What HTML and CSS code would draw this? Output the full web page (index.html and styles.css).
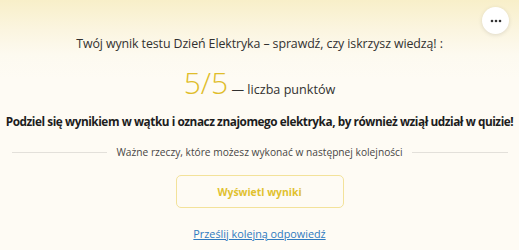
FILE: index.html
```html
<!DOCTYPE html>
<html lang="pl">
<head>
  <meta charset="UTF-8">
  <title>Wynik testu</title>
  <link rel="stylesheet" href="styles.css">
</head>
<body>
  <div class="result-page">
    <button class="more-btn" type="button" aria-label="Więcej opcji">
      <svg width="12" height="4" viewBox="0 0 12 4"><circle cx="2" cy="2" r="1.3"/><circle cx="6" cy="2" r="1.3"/><circle cx="10" cy="2" r="1.3"/></svg>
    </button>
    <p class="result-title">Twój wynik testu Dzień Elektryka – sprawdź, czy iskrzysz wiedzą! :</p>
    <p class="score"><span class="score-value">5/5</span> — liczba punktów</p>
    <p class="share-text">Podziel się wynikiem w wątku i oznacz znajomego elektryka, by również wziął udział w quizie!</p>
    <div class="divider"><span>Ważne rzeczy, które możesz wykonać w następnej kolejności</span></div>
    <button class="results-btn" type="button">Wyświetl wyniki</button>
    <a class="again-link" href="#">Prześlij kolejną odpowiedź</a>
  </div>
</body>
</html>
```

FILE: styles.css
```css
html, body {
  margin: 0;
  padding: 0;
  height: 100%;
}
body {
  font-family: 'Open Sans', 'Noto Sans', Arial, sans-serif;
  color: #323130;
  background: linear-gradient(180deg, #f8efc9 0px, #fbf5e0 30px, #fdfaf0 55px, #fefbf4 80px, #fefbf4 100%);
  overflow: hidden;
}
.result-page {
  position: relative;
  height: 250px;
  display: flex;
  flex-direction: column;
  align-items: center;
  padding-top: 34px;
  box-sizing: border-box;
}
.more-btn {
  position: absolute;
  top: 7px;
  right: 10px;
  width: 27px;
  height: 27px;
  border-radius: 50%;
  border: none;
  background: #fff;
  box-shadow: 0 1px 4px rgba(0,0,0,0.12);
  display: flex;
  align-items: center;
  justify-content: center;
  padding: 0;
}
.more-btn svg { fill: #333; }
p { margin: 0; }
.result-title {
  font-size: 12.4px;
  letter-spacing: -0.1px;
  line-height: 20px;
}
.score {
  margin-top: 12px;
  font-size: 12.6px;
  line-height: 34px;
}
.score-value {
  font-size: 30px;
  color: #e0bd2a;
  font-weight: 300;
}
.share-text {
  margin-top: 5px;
  font-size: 11.8px;
  letter-spacing: -0.45px;
  font-weight: 700;
  line-height: 18px;
  color: #1d1d1d;
  white-space: nowrap;
}
.divider {
  margin-top: 15px;
  width: 496px;
  display: flex;
  align-items: center;
  gap: 9px;
  font-size: 10.2px;
  color: #484644;
}
.divider::before, .divider::after {
  content: "";
  flex: 1;
  height: 1px;
  background: #e3e0da;
}
.results-btn {
  margin-top: 16px;
  width: 168px;
  height: 33px;
  border: 1px solid #f3e29a;
  border-radius: 5px;
  background: transparent;
  font-family: inherit;
  font-size: 10.4px;
  font-weight: 700;
  color: #e1c12e;
}
.again-link {
  margin-top: 18px;
  font-size: 10.8px;
  color: #2f7ac0;
  text-decoration: underline;
}
```
